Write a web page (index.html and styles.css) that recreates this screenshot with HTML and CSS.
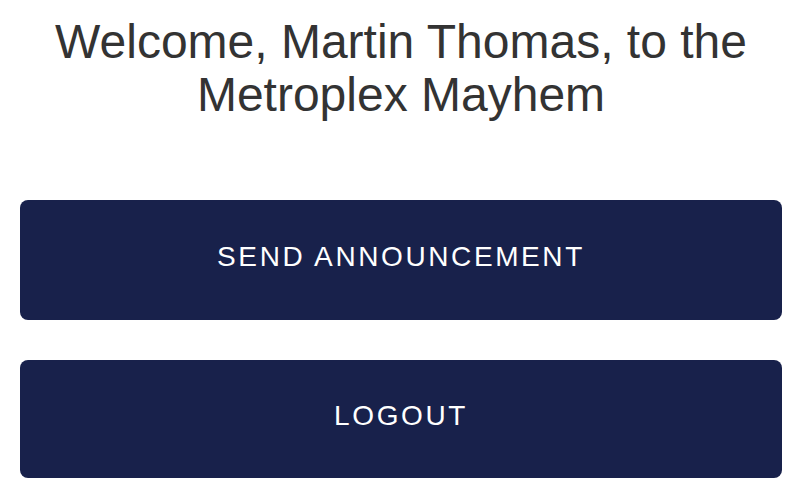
FILE: index.html
```html
<!DOCTYPE html>
<html>
<head>
<meta charset="utf-8">
<link rel="stylesheet" href="styles.css">
</head>
<body>
<main class="page">
  <h1 class="title">Welcome, Martin Thomas, to the Metroplex Mayhem</h1>
  <div class="actions">
    <button class="btn">SEND ANNOUNCEMENT</button>
    <button class="btn">LOGOUT</button>
  </div>
</main>
</body>
</html>
```
FILE: styles.css
```css
html, body {
  margin: 0;
  padding: 0;
  background: #ffffff;
}
.page {
  padding: 15px 20px 0;
  font-family: "Liberation Sans", Arial, sans-serif;
}
.title {
  margin: 0 auto;
  max-width: 720px;
  text-align: center;
  font-weight: normal;
  font-size: 48px;
  line-height: 53px;
  color: #333333;
}
.actions {
  display: flex;
  flex-direction: column;
  gap: 40px;
  margin-top: 79px;
}
.btn {
  height: 120px;
  border: none;
  border-radius: 8px;
  background: #18214b;
  color: #ffffff;
  font-family: "Liberation Sans", Arial, sans-serif;
  font-size: 28px;
  letter-spacing: 2.6px;
  padding: 0;
  padding-bottom: 6px;
}
.btn:last-child {
  height: 118px;
}
```
